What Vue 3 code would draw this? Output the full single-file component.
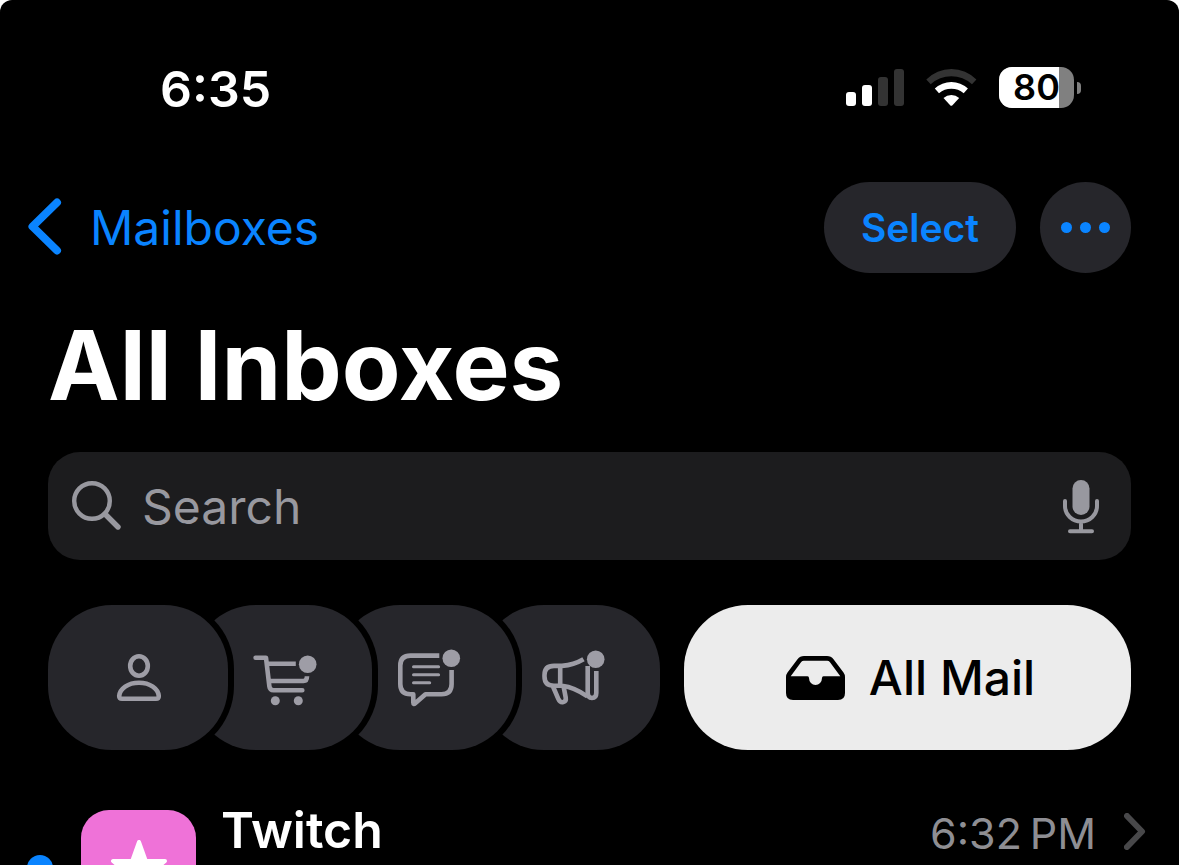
<template>
  <div class="screen">
    <header class="status-bar">
      <time class="clock">6:35</time>
      <div class="indicators">
        <div class="signal" role="img" aria-label="Signal: 2 of 4 bars">
          <span
            v-for="bar in signalBars"
            :key="bar.height"
            class="signal-bar"
            :class="{ active: bar.active }"
            :style="{ height: bar.height + 'px' }"
          ></span>
        </div>
        <svg class="wifi" viewBox="0 0 51 37" role="img" aria-label="Wi-Fi">
          <path class="wifi-off" d="M.3 10.600A35 35 0 0 1 50.400 10.600L46 15.300A30.500 30.500 0 0 0 4.700 15.300Z" />
          <path d="M8.800 19.400A24.500 24.500 0 0 1 41.900 19.400L37.700 24.200A19.600 19.600 0 0 0 13 24.200Z" />
          <path d="M17.500 29A12 12 0 0 1 33.200 29L26.200 36.400Q25.300 37.200 24.400 36.400Z" />
        </svg>
        <div class="battery">
          <div class="battery-body">
            <span class="battery-level" :style="{ width: batteryLevel + '%' }"></span>
            <span class="battery-text">{{ batteryLevel }}</span>
          </div>
          <span class="battery-cap"></span>
        </div>
      </div>
    </header>

    <nav class="nav-bar">
      <a href="#" class="back-link">
        <svg class="back-icon" viewBox="0 0 34 59" aria-hidden="true">
          <path d="M29 4.500L4.500 28.500L29 52.500" />
        </svg>
        Mailboxes
      </a>
      <div class="nav-actions">
        <button type="button" class="select-btn">Select</button>
        <button type="button" class="more-btn" aria-label="More">
          <span></span><span></span><span></span>
        </button>
      </div>
    </nav>

    <main class="content">
      <h1 class="title">All Inboxes</h1>

      <div class="search-box">
        <svg class="search-icon" viewBox="0 0 50 50" aria-hidden="true">
          <circle cx="20" cy="20" r="17.800" />
          <path class="handle" d="M33 33L46 46" />
        </svg>
        <input v-model="query" type="search" placeholder="Search" aria-label="Search" />
        <button type="button" class="mic-btn" aria-label="Dictate">
          <svg class="mic-icon" viewBox="0 -2 36 56" aria-hidden="true">
            <rect x="9.500" y="0" width="17" height="35" rx="8.500" />
            <path d="M2 21V26A16 15.500 0 0 0 34 26V21M18 42V51M7 51.200H29" />
          </svg>
        </button>
      </div>

      <div class="filters">
        <div class="categories">
          <button type="button" class="category" aria-label="Primary">
            <svg class="category-icon" viewBox="0 0 72 65" aria-hidden="true">
              <ellipse cx="37" cy="21" rx="8.800" ry="9.700" />
              <path d="M20 53.800H54Q56.800 53.800 56.800 51C56.200 43.500 48 37.700 37 37.700C26 37.700 17.800 43.500 17.200 51Q17.200 53.800 20 53.800Z" />
            </svg>
          </button>
          <button type="button" class="category" aria-label="Transactions">
            <svg class="category-icon" viewBox="0 0 72 65" aria-hidden="true">
              <path d="M9.600 12.700H20L23.400 41.500Q23.900 45.300 27.500 45.300H56.300" />
              <path class="butt" d="M21 18.700H49.800M22.500 36H57.500Q61 36 61 31.300" />
              <circle class="solid" cx="29.300" cy="55.700" r="4.500" />
              <circle class="solid" cx="52.300" cy="55.700" r="4.500" />
              <circle class="solid" cx="61.700" cy="19.200" r="8.800" />
            </svg>
          </button>
          <button type="button" class="category" aria-label="Updates">
            <svg class="category-icon" viewBox="0 0 72 65" aria-hidden="true">
              <path class="butt" d="M49.300 10.600H20.500Q10.300 10.600 10.300 20.500V39Q10.300 49.200 20.500 49.200H23.300V57.500Q23.300 60 25.200 58.300L35.500 49.200H51.500Q61.600 49.200 61.600 39V25" />
              <path class="thin" d="M23.500 21.700H48.600M23.500 29.700H48.600M23.500 37.700H39.700" />
              <circle class="solid" cx="61.300" cy="13.200" r="8.800" />
            </svg>
          </button>
          <button type="button" class="category" aria-label="Promotions">
            <svg class="category-icon" viewBox="0 0 72 65" aria-hidden="true">
              <path class="butt" d="M49.500 14.200Q40 19.800 28 20.900H20Q10.500 20.900 10.500 30V31.500Q10.500 40.700 20 40.700H28Q41 42.400 53.500 51.500M26.200 21V40.700" />
              <path class="butt" d="M53.700 21V48Q53.700 53 58 53Q62.300 53 62.300 48V26" />
              <path class="butt" d="M19 41.500L24.300 53.800Q26 57.800 29.300 57.100Q32.400 56.300 31.700 52.500L29.600 41.500" />
              <circle class="solid" cx="61.700" cy="14.200" r="8.800" />
            </svg>
          </button>
        </div>
        <button type="button" class="all-mail">
          <svg class="tray-icon" viewBox="0 0 59 44" aria-hidden="true">
            <path fill-rule="evenodd" d="M0 37V21Q0 18.500 1.500 16.500L11.500 3.200Q14 0 18 0H41Q45 0 47.500 3.200L57.500 16.500Q59 18.500 59 21V37Q59 44 52 44H7Q0 44 0 37ZM4.700 20.300H21.500Q23 20.300 23 22A6.500 7 0 0 0 36 22Q36 20.300 37.500 20.300H54.300L43.800 6Q42.800 4.700 41.200 4.700H17.800Q16.200 4.700 15.200 6Z" />
          </svg>
          All Mail
        </button>
      </div>

      <article class="message">
        <span class="unread-dot" role="img" aria-label="Unread"></span>
        <div class="avatar">
          <svg viewBox="0 0 60 58" aria-hidden="true">
            <path d="M30 3L36.800 22L56 22L40.800 35L46.300 54L30 43L13.700 54L19.200 35L4 22L23.200 22Z" />
          </svg>
        </div>
        <h2 class="sender">{{ message.sender }}</h2>
        <time class="time">{{ message.time }}</time>
        <svg class="disclosure" viewBox="0 0 22 37" aria-hidden="true">
          <path d="M3 3L18 18.500L3 34" />
        </svg>
      </article>
    </main>
  </div>
</template>

<script setup>
import { ref } from 'vue';

const query = ref('');
const batteryLevel = 80;

const signalBars = [
  { height: 14, active: true },
  { height: 21, active: true },
  { height: 29, active: false },
  { height: 37, active: false },
];

const message = {
  sender: 'Twitch',
  time: '6:32\u202FPM',
};
</script>

<style>
body {
  background: white;
}
</style>

<style scoped>
.screen {
  height: 100vh;
  overflow: hidden;
  border-radius: 12px 12px 0 0;
  background: #000;
  color: white;
  font-family: Inter, "Liberation Sans", sans-serif;
}

button {
  border: none;
  padding: 0;
  font-family: inherit;
  cursor: pointer;
}

.status-bar {
  display: flex;
  align-items: flex-start;
  justify-content: space-between;
  padding: 56px 98px 0 160px;
}

.clock {
  font-size: 50px;
  line-height: 66px;
  font-weight: 600;
}

.indicators {
  display: flex;
  align-items: center;
  gap: 22px;
  height: 63px;
}

.signal {
  display: flex;
  align-items: flex-end;
  gap: 6px;
}

.signal-bar {
  width: 10px;
  border-radius: 3px;
  background: #333;
}

.signal-bar.active {
  background: white;
}

.wifi {
  width: 51px;
  height: 37px;
  fill: white;
}

.wifi-off {
  fill: #333;
}

.battery {
  display: flex;
  align-items: center;
  gap: 3px;
}

.battery-body {
  position: relative;
  width: 75px;
  border-radius: 13px;
  background: #808080;
}

.battery-level {
  position: absolute;
  inset: 0 auto 0 0;
  border-radius: 13px 0 0 13px;
  background: white;
}

.battery-text {
  position: relative;
  display: block;
  color: black;
  font-size: 36px;
  line-height: 41px;
  font-weight: 600;
  text-align: center;
}

.battery-cap {
  width: 4px;
  height: 12px;
  border-radius: 0 4px 4px 0;
  background: #808080;
}

.nav-bar {
  display: flex;
  align-items: center;
  justify-content: space-between;
  padding: 60px 48px 0 28px;
}

.back-link {
  display: flex;
  align-items: center;
  gap: 28px;
  color: #0a84ff;
  font-size: 48px;
  line-height: 64px;
  text-decoration: none;
}

.back-icon {
  width: 34px;
  height: 59px;
  fill: none;
  stroke: #0a84ff;
  stroke-width: 8;
  stroke-linecap: round;
  stroke-linejoin: round;
}

.nav-actions {
  display: flex;
  gap: 24px;
}

.select-btn {
  width: 192px;
  height: 91px;
  border-radius: 46px;
  background: #26262b;
  color: #0a84ff;
  font-size: 39px;
  font-weight: 600;
}

.more-btn {
  display: flex;
  align-items: center;
  justify-content: center;
  gap: 8px;
  width: 91px;
  height: 91px;
  border-radius: 50%;
  background: #26262b;
}

.more-btn span {
  width: 11px;
  height: 11px;
  border-radius: 50%;
  background: #0a84ff;
}

.content {
  padding: 32px 48px 0;
}

.title {
  margin: 0;
  font-size: 96px;
  line-height: 120px;
  font-weight: 700;
}

.search-box {
  display: flex;
  align-items: center;
  height: 108px;
  margin-top: 27px;
  padding: 0 32px 0 24px;
  border-radius: 32px;
  box-sizing: border-box;
  background: #1c1c1e;
}

.search-icon {
  flex: none;
  width: 50px;
  height: 50px;
  fill: none;
  stroke: #98989f;
  stroke-width: 4.4;
}

.search-icon .handle {
  stroke-width: 5.4;
  stroke-linecap: round;
}

.search-box input {
  flex: 1;
  min-width: 0;
  margin-left: 20px;
  padding: 2px 0 0;
  border: none;
  outline: none;
  background: transparent;
  color: white;
  font-family: inherit;
  font-size: 48px;
  line-height: 64px;
}

.search-box input::placeholder {
  color: #98989f;
  opacity: 1;
}

.mic-btn {
  display: flex;
  background: transparent;
}

.mic-icon {
  width: 36px;
  height: 56px;
  fill: #98989f;
}

.mic-icon path {
  fill: none;
  stroke: #98989f;
  stroke-width: 4;
  stroke-linecap: round;
}

.filters {
  display: flex;
  gap: 24px;
  margin-top: 45px;
}

.categories {
  display: flex;
  isolation: isolate;
}

/* Each pill sits on top of the next one, with a black ring between them */
.category {
  position: relative;
  display: flex;
  align-items: center;
  justify-content: center;
  width: 180px;
  height: 145px;
  border-radius: 64px;
  background: #26262b;
  box-shadow: 0 0 0 6px black;
}

.category + .category {
  margin-left: -36px;
}

.category:nth-child(1) {
  z-index: 4;
}

.category:nth-child(2) {
  z-index: 3;
}

.category:nth-child(3) {
  z-index: 2;
}

.category:nth-child(4) {
  z-index: 1;
}

.category-icon {
  width: 72px;
  height: 65px;
  fill: none;
  stroke: #9e9da6;
  stroke-width: 4.6;
  stroke-linecap: round;
  stroke-linejoin: round;
}

.category-icon .butt {
  stroke-linecap: butt;
}

.category-icon .thin {
  stroke-width: 3;
}

.category-icon .solid {
  fill: #9e9da6;
  stroke: none;
}

.all-mail {
  flex: 1;
  display: flex;
  align-items: center;
  justify-content: center;
  gap: 24px;
  height: 145px;
  padding-left: 6px;
  border-radius: 64px;
  background: #ececec;
  color: black;
  font-size: 48px;
  font-weight: 500;
}

.tray-icon {
  width: 59px;
  height: 44px;
}

.message {
  display: flex;
  align-items: flex-start;
  margin: 60px -15px 0 -21px;
}

.unread-dot {
  flex: none;
  align-self: center;
  width: 26px;
  height: 26px;
  border-radius: 50%;
  background: #0a84ff;
}

.avatar {
  display: flex;
  align-items: center;
  justify-content: center;
  width: 115px;
  height: 115px;
  margin-left: 28px;
  border-radius: 28px;
  background: #ef72d8;
}

.avatar svg {
  width: 60px;
  height: 58px;
  fill: white;
  stroke: white;
  stroke-width: 4;
  stroke-linejoin: round;
}

.sender {
  flex: 1;
  margin: 0 0 0 25px;
  font-size: 50px;
  line-height: 40px;
  font-weight: 600;
}

.time {
  color: #8e8e93;
  font-size: 43px;
  line-height: 46px;
}

.disclosure {
  width: 22px;
  height: 37px;
  margin: 3px 0 0 28px;
  fill: none;
  stroke: #48484a;
  stroke-width: 6;
  stroke-linecap: round;
  stroke-linejoin: round;
}
</style>
